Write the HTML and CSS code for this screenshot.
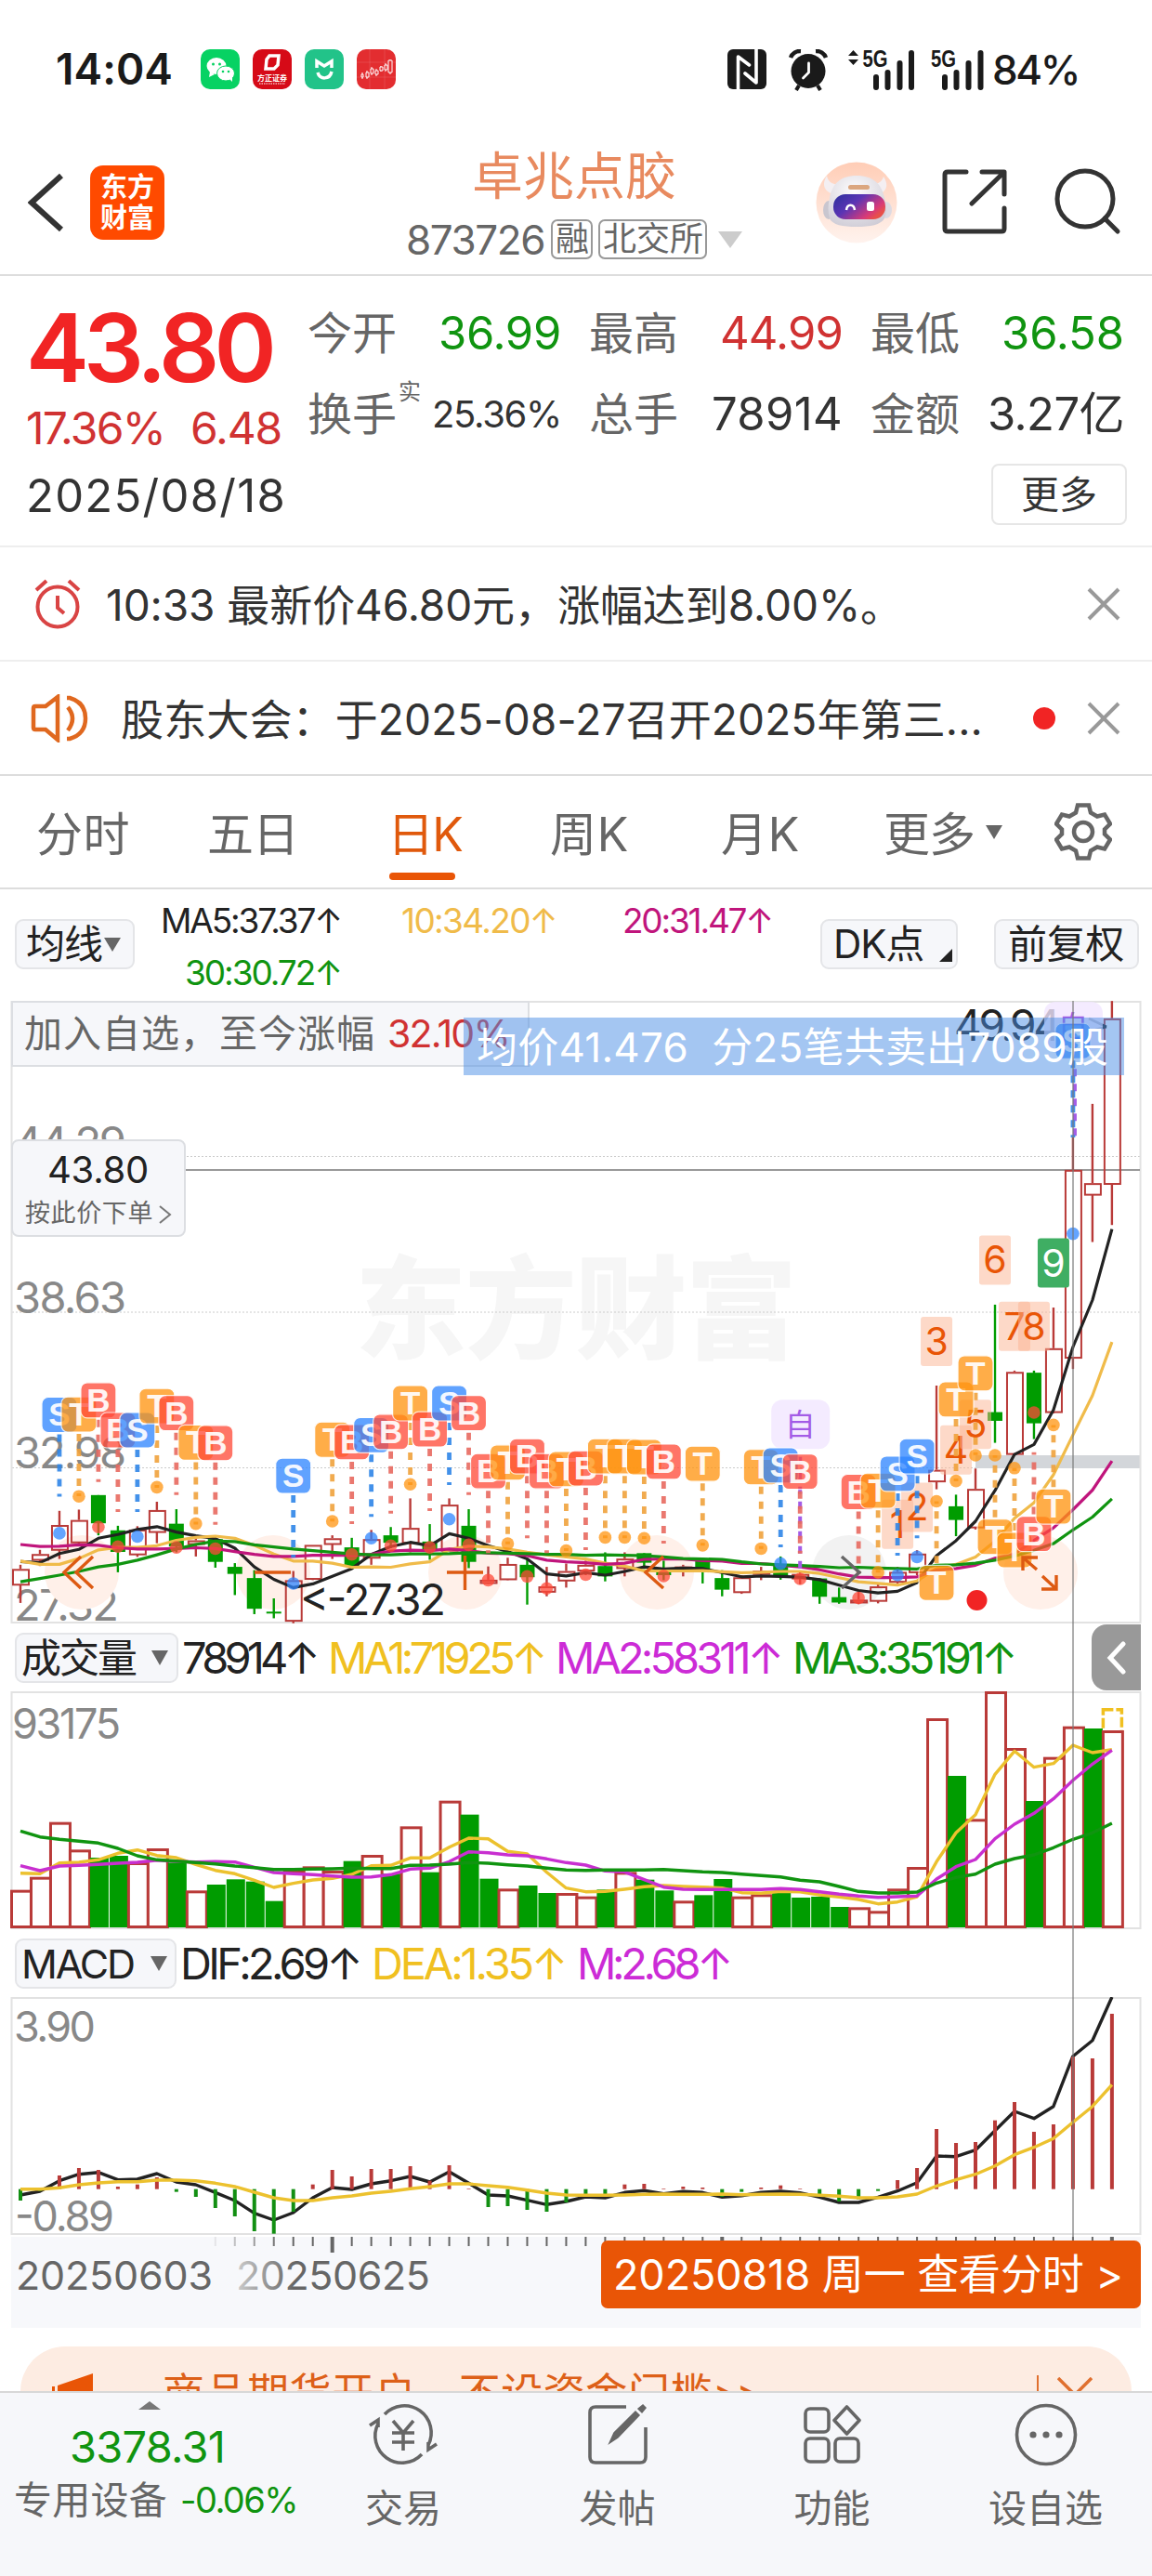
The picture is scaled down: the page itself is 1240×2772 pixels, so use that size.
FILE: index.html
```html
<!DOCTYPE html>
<html lang="zh-CN">
<head>
<meta charset="utf-8">
<title>卓兆点胶 873726</title>
<link rel="stylesheet" href="styles.css">
</head>
<body>
<div class="app">
  <div class="status">
    <span class="clock" data-fit="126">14:04</span>
    <div class="apps">
      <svg width="42" height="43" viewBox="0 0 42 43"><rect width="42" height="43" rx="10" fill="#07d263"/><ellipse cx="17" cy="18" rx="10.500" ry="9" fill="#fff"/><path d="M10 24l-1 6 6-3z" fill="#fff"/><circle cx="13.500" cy="16" r="1.500" fill="#07d263"/><circle cx="20.500" cy="16" r="1.500" fill="#07d263"/><ellipse cx="27" cy="26" rx="9.500" ry="8" fill="#fff" stroke="#07d263" stroke-width="1"/><path d="M31 32l3 3v-6z" fill="#fff"/><circle cx="24" cy="24" r="1.300" fill="#07d263"/><circle cx="30" cy="24" r="1.300" fill="#07d263"/></svg>
      <svg width="42" height="43" viewBox="0 0 42 43"><rect width="42" height="43" rx="10" fill="#d60a17"/><path d="M18 7h10l-1 10-4 4h-9l1-10z" fill="none" stroke="#fff" stroke-width="3.500"/><text x="21" y="34" class="tiny" text-anchor="middle">方正证券</text><path d="M7 37h28" stroke="#fff" stroke-width="1.500" stroke-dasharray="1.500 1" opacity=".7"/></svg>
      <svg width="42" height="43" viewBox="0 0 42 43"><rect width="42" height="43" rx="10" fill="#22c389"/><path d="M13 20v-7l8 5 8-5v7" fill="none" stroke="#fff" stroke-width="3.500"/><path d="M14 25c2 8 13 8 15-1" fill="none" stroke="#fff" stroke-width="3.500"/></svg>
      <svg width="42" height="43" viewBox="0 0 42 43"><rect width="42" height="43" rx="10" fill="#e32d30"/><path d="M0 14h42M0 30h42M14 0v43M30 0v43" stroke="#fff" stroke-width=".5" opacity=".25"/><path d="M6 25v7M11 23v9M16 19v9M21 21v8M26 18v6M31 15v9M36 11v16" stroke="#fff" stroke-width="1"/><path d="M5 27h2v3H5zM10 25h3v5h-3zM15 21h3v5h-3zM20 23h3v4h-3zM25 19h3v4h-3zM30 17h3v5h-3zM34 12h4v13h-4z" fill="#e32d30" stroke="#fff"/></svg>
    </div>
    <div class="signals">
      <svg class="nfc" width="42" height="43" viewBox="0 0 42 43"><rect width="42" height="43" rx="6" fill="#1a1a1a"/><path d="M11.500 43V8l12 9M31 0v36L19 26" fill="none" stroke="#fff" stroke-width="3.600" stroke-linecap="round" stroke-linejoin="round"/></svg>
      <svg class="bell" width="44" height="45" viewBox="0 0 44 45"><circle cx="22" cy="23.500" r="18.500" fill="#1a1a1a"/><path d="M3 9a11 11 0 0 1 11-7M41 9a11 11 0 0 0-11-7" stroke="#1a1a1a" stroke-width="4.500" fill="none"/><path d="M9 44l3-5M35 44l-3-5" stroke="#1a1a1a" stroke-width="4"/><path d="M22.500 15v10l-6 6" fill="none" stroke="#fff" stroke-width="2.800" stroke-linecap="round"/></svg>
      <svg width="72" height="45" viewBox="0 0 72 45"><path d="M0 7l5.500-6L11 7zM0 11l5.500 6L11 11z" fill="#1a1a1a"/><text x="15.500" y="19" class="g5" textLength="27" lengthAdjust="spacingAndGlyphs">5G</text><path d="M30 30v11M42.500 25v16M55.500 15v26M68 4v37" stroke="#1a1a1a" stroke-width="6" stroke-linecap="round"/></svg>
      <svg class="sim2" width="58" height="45" viewBox="0 0 58 45"><text x="0" y="19" class="g5" textLength="27" lengthAdjust="spacingAndGlyphs">5G</text><path d="M15 30v11M27.500 25v16M40.500 15v26M53.500 4v37" stroke="#1a1a1a" stroke-width="6" stroke-linecap="round"/></svg>
      <span class="battery" data-fit="93">84%</span>
    </div>
  </div>

  <header class="head">
    <svg class="back" width="40" height="66" viewBox="0 0 40 66"><path d="M36 4L4 33l32 29" fill="none" stroke="#333" stroke-width="6"/></svg>
    <div class="logo"><span>东方</span><span>财富</span></div>
    <div class="name">
      <div class="title" data-fit="220">卓兆点胶</div>
      <div class="code"><span class="num" data-fit="149">873726</span><span class="chip" >融</span><span class="chip"><span data-fit="108">北交所</span></span><i class="tri light"></i></div>
    </div>
    <svg class="robot" width="88" height="88" viewBox="0 0 88 88">
      <defs><linearGradient id="visor" x1="0" y1="0" x2="1" y2=".6"><stop offset="0" stop-color="#2a2f9c"/><stop offset=".45" stop-color="#5b35b4"/><stop offset=".85" stop-color="#d83a78"/><stop offset="1" stop-color="#e8504a"/></linearGradient>
      <linearGradient id="halo" x1="0" y1="0" x2="0" y2="1"><stop offset="0" stop-color="#ffcdb6"/><stop offset="1" stop-color="#fff3ee"/></linearGradient>
      <radialGradient id="shell" cx=".45" cy=".3" r=".75"><stop offset="0" stop-color="#fdfcfd"/><stop offset="1" stop-color="#cfccd6"/></radialGradient></defs>
      <circle cx="44" cy="44" r="43.500" fill="url(#halo)"/>
      <path d="M12 15c-5 8-4 15 4 19l8-9c-7-1-11-4-12-10zM73 16c5 8 4 13-1 17l-8-9c5-1 8-4 9-8z" fill="#f4efF2"/>
      <ellipse cx="14" cy="52" rx="6" ry="10" fill="#c9c6cf"/><ellipse cx="76" cy="52" rx="6" ry="9" fill="#dddae2"/>
      <path d="M44 15c18 0 27 9 30 24 2 8 3 15 0 22-4 7-15 9-30 9s-26-2-29-9c-2-7-2-14 0-22 3-15 11-24 29-24z" fill="url(#shell)"/>
      <rect x="35" y="25" width="23" height="5" rx="2.500" fill="#dba67f"/>
      <rect x="19" y="35" width="56" height="27" rx="13" fill="url(#visor)"/>
      <path d="M33 52c1-7 8-7 9 0" fill="none" stroke="#fff" stroke-width="2.500"/><rect x="55" y="43" width="8" height="10" rx="2.500" fill="#fff"/>
    </svg>
    <svg class="share" width="70" height="70" viewBox="0 0 70 70"><path d="M26 3H6Q3 3 3 6v58q0 3 3 3h58q3 0 3-3V42M43 3h24v24M65 5L32 37" fill="none" stroke="#333" stroke-width="5" stroke-linejoin="round" stroke-linecap="round"/></svg>
    <svg class="search" width="72" height="72" viewBox="0 0 72 72"><circle cx="33" cy="33" r="30" fill="none" stroke="#333" stroke-width="5"/><path d="M54 54l14 14" stroke="#333" stroke-width="5" stroke-linecap="round"/></svg>
  </header>

  <section class="quote">
    <div class="last">
      <div class="price"><span data-fit="264">43.80</span></div>
      <div class="chg"><span data-fit="149">17.36%</span><span data-fit="98">6.48</span></div>
    </div>
    <dl class="stats">
      <div><dt>今开</dt><dd class="dn" data-fit="132">36.99</dd></div>
      <div><dt>最高</dt><dd class="up" data-fit="132">44.99</dd></div>
      <div><dt>最低</dt><dd class="dn" data-fit="132">36.58</dd></div>
      <div><dt>换手<sup>实</sup></dt><dd class="pct" data-fit="139">25.36%</dd></div>
      <div><dt>总手</dt><dd data-fit="141">78914</dd></div>
      <div><dt>金额</dt><dd data-fit="147">3.27亿</dd></div>
    </dl>
    <span class="date"><span data-fit="280">2025/08/18</span></span>
    <button class="more">更多</button>
  </section>

  <div class="alert">
    <svg class="ai" width="52" height="56" viewBox="0 0 52 56"><circle cx="26" cy="31" r="21.500"/><path d="M26 19v13l7 6M3 13L14 3M49 13L38 3"/></svg>
    <span class="msg" data-fit="858">10:33 最新价46.80元，涨幅达到8.00%。</span>
    <svg class="x" width="36" height="36" viewBox="0 0 36 36"><path d="M2 2l32 32M34 2L2 34"/></svg>
  </div>
  <div class="alert second">
    <svg class="ai orange" width="62" height="52" viewBox="0 0 62 52"><path d="M29 3L16 13H5q-2 0-2 2v21q0 2 2 2h11l13 11zM40 14q10 12 0 25M39 4h3q17 5 17 22t-17 22h-3"/></svg>
    <span class="msg" data-fit="928">股东大会：于2025-08-27召开2025年第三...</span>
    <i class="dot"></i>
    <svg class="x" width="36" height="36" viewBox="0 0 36 36"><path d="M2 2l32 32M34 2L2 34"/></svg>
  </div>

  <nav class="tabs">
    <span data-fit="101">分时</span><span data-fit="98">五日</span><span class="on" data-fit="80">日K</span><span data-fit="85">周K</span><span data-fit="85">月K</span><span data-fit="98">更多</span><i class="tri"></i>
    <svg width="62" height="62" viewBox="0 0 62 62"><path d="M25 3h12l2 8 7 4 8-2 6 10-6 6v5l6 6-6 10-8-2-7 4-2 8H25l-2-8-7-4-8 2-6-10 6-6v-5l-6-6 6-10 8 2 7-4z" transform="translate(0 -.5)"/><circle cx="31" cy="31" r="10"/></svg>
  </nav>

  <div class="mabar">
    <button class="pill avg"><span data-fit="82">均线</span><i class="tri"></i></button>
    <div class="mas"><span class="m5" data-fit="194">MA5:37.37↑</span><span class="m10" data-fit="167">10:34.20↑</span><span class="m20" data-fit="161">20:31.47↑</span><span class="m30" data-fit="168">30:30.72↑</span></div>
    <button class="pill dk"><span data-fit="97">DK点</span><i></i></button>
    <button class="pill fq"><span data-fit="125">前复权</span></button>
  </div>

  <main class="charts">
    <div class="pane"><svg id="price" width="1240" height="670"></svg>
      <div class="joined"><span data-fit="378">加入自选，至今涨幅</span><b data-fit="131">32.10%</b></div>
      <div class="order"><span data-fit="109">43.80</span><div><em data-fit="138">按此价下单</em><svg width="14" height="20" viewBox="0 0 14 20"><path d="M1 1l11 9-11 9" fill="none" stroke="#777" stroke-width="2"/></svg></div></div>
      <div class="banner"><span data-fit="680">均价41.476&nbsp; 分25笔共卖出7089股</span></div>
    </div>
    <div class="legend">
      <button class="pill ind"><span data-fit="123">成交量</span><i class="tri"></i></button>
      <span class="k" data-fit="144">78914↑</span><span class="y" data-fit="232">MA1:71925↑</span><span class="p" data-fit="242">MA2:58311↑</span><span class="g" data-fit="238">MA3:35191↑</span>
      <div class="side"><svg width="22" height="38" viewBox="0 0 22 38"><path d="M18 4L4 19l14 15" fill="none" stroke="#fff" stroke-width="5" stroke-linecap="round"/></svg></div>
    </div>
    <svg id="volume" width="1240" height="256"></svg>
    <div class="legend macd">
      <button class="pill ind"><span data-fit="121">MACD</span><i class="tri"></i></button>
      <span class="k" data-fit="193">DIF:2.69↑</span><span class="y" data-fit="208">DEA:1.35↑</span><span class="p" data-fit="164">M:2.68↑</span>
    </div>
    <svg id="macd" width="1240" height="256"></svg>
    <svg id="axis" width="1240" height="100"></svg>
    <i class="cross"></i>
    <div class="tip"><span data-fit="549">20250818 周一 查看分时 &gt;</span></div>
  </main>

  <div class="promo">
    <svg width="46" height="60" viewBox="0 0 46 60"><path d="M0 16h3v30H0zM6 15L44 2v52L6 42z" fill="#e95506"/></svg>
    <div><span data-fit="592">商品期货开户，不设资金门槛</span><span data-fit="50">&gt;&gt;</span></div>
    <i></i>
    <svg class="px" width="38" height="38" viewBox="0 0 38 38"><path d="M1 1l36 36M37 1L1 37" stroke="#e0702f" stroke-width="3.500"/></svg>
  </div>

  <footer class="dock">
    <div class="index"><i class="upt"></i><span class="pts" data-fit="167">3378.31</span><div><span data-fit="165">专用设备</span><em data-fit="126">-0.06%</em></div></div>
    <div class="item"><svg width="78" height="68" viewBox="0 0 78 68"><path d="M19 12A29 29 0 0 1 66 45M59 55A29 29 0 0 1 12 22M3 24l9-6v8M75 44l-9 6v-8"/><path d="M28 19l11 13 11-13M27 32h24M27 42h24M39 32v19"/></svg><span>交易</span></div>
    <div class="item"><svg width="66" height="68" viewBox="0 0 66 68"><path d="M42 4H9Q3 4 3 10v48q0 6 6 6h48q6 0 6-6V26"/><path d="M24 43l5-11L52 9l4 4-23 24zM55 6l5-4 3 3-4 5z" fill="#666" stroke-width="1.500"/></svg><span>发帖</span></div>
    <div class="item"><svg width="62" height="68" viewBox="0 0 62 68"><rect x="2" y="6" width="25" height="25" rx="5"/><rect x="2" y="38" width="25" height="25" rx="5"/><rect x="34" y="38" width="25" height="25" rx="5"/><path d="M46.500 4L60 18.500 46.500 33 33 18.500z" stroke-linejoin="round"/></svg><span>功能</span></div>
    <div class="item"><svg width="68" height="68" viewBox="0 0 68 68"><circle cx="34" cy="34" r="31.500"/><g fill="#666" stroke="none"><circle cx="20" cy="34" r="3.600"/><circle cx="34" cy="34" r="3.600"/><circle cx="48" cy="34" r="3.600"/></g></svg><span>设自选</span></div>
  </footer>
</div>
<script src="chart.js"></script>
</body>
</html>
```

FILE: styles.css
```css
* { box-sizing: border-box; margin: 0; padding: 0; }
body { font-family: Inter, "Noto Sans CJK SC", sans-serif; color: #333; background: #fff; }
button { font: inherit; color: inherit; }
i, em { font-style: normal; }
svg { display: block; flex: none; }
[data-fit] { white-space: nowrap; }
.app { width: 1240px; height: 2772px; overflow: hidden; display: flex; flex-direction: column; }
.tri { width: 0; height: 0; border: 9px solid transparent; border-top: 15px solid #666; border-bottom: 0; flex: none; }
.tri.light { border-width: 18px 13px 0; border-top-color: #ccc; margin-left: 6px; }

.status { height: 150px; padding: 53px 79px 0 60px; display: flex; align-items: flex-start; color: #1a1a1a; }
.clock { font-size: 46px; font-weight: 600; line-height: 43px; margin-right: 30px; }
.apps { display: flex; gap: 14px; }
.tiny { font: bold 8px "Noto Sans CJK SC", sans-serif; fill: #fff; }
.g5 { font: 700 25px "Liberation Sans", sans-serif; fill: #1a1a1a; }
.signals { margin-left: auto; display: flex; }
.bell { margin: 0 21px 0 23px; }
.sim2 { margin: 0 8px 0 17px; }
.battery { font-size: 44px; font-weight: 550; line-height: 44px; }

.head { height: 147px; border-bottom: 2px solid #ddd; display: flex; position: relative; }
.back { margin: 35px 0 0 30px; }
.logo { width: 80px; height: 80px; margin: 28px 0 0 27px; border-radius: 14px; background: #ff4a00; color: #fff; display: flex; flex-direction: column; align-items: center; justify-content: center; font-size: 29px; line-height: 33px; font-weight: 700; }
.name { width: 380px; margin-left: 254px; }
.title { font-size: 55px; line-height: 70px; color: #e88a5f; margin: 4px 0 0 77px; }
.code { display: flex; align-items: center; height: 48px; margin-top: 10px; padding-left: 6px; color: #666; }
.code .num { font-size: 44px; margin-right: 7px; }
.chip { border: 2px solid #999; border-radius: 7px; height: 43px; line-height: 38px; font-size: 36px; padding: 0 2px 0 3px; margin-right: 6px; white-space: nowrap; }
.robot { margin: 24px 0 0 67px; }
.share { margin: 32px 0 0 48px; }
.search { margin: 31px 0 0 51px; }

.quote { height: 293px; border-bottom: 2px solid #eee; padding: 27px 27px 0 28px; display: grid; grid-template-columns: 303px 1fr; grid-template-rows: 175px 66px; }
.price { font-size: 102px; line-height: 100px; font-weight: 570; color: #f12424; }
.chg { display: flex; gap: 28px; font-size: 48px; line-height: 73px; color: #d03232; }
.stats { display: grid; grid-template-columns: repeat(3, 273px); column-gap: 30px; grid-template-rows: 70px 105px; }
.stats div { display: flex; justify-content: space-between; align-items: center; }
.stats dt { font-size: 48px; color: #666; position: relative; line-height: 60px; }
.stats dd { font-size: 49px; line-height: 60px; }
.stats dd.pct { font-size: 40px; }
.stats sup { position: absolute; left: 98px; top: -9px; font-size: 24px; line-height: 30px; }
.dn { color: #109410; }
.up { color: #d03232; }
.date { font-size: 49px; line-height: 68px; padding-top: 1px; }
.more { width: 146px; height: 66px; justify-self: end; border: 2px solid #e6e6e6; border-radius: 8px; background: #fff; font-size: 41px; line-height: 56px; }

.alert { height: 123px; border-bottom: 2px solid #eee; padding: 0 34px 0 36px; display: flex; align-items: center; }
.alert.second { padding-left: 33px; border-color: #ddd; }
.ai { fill: none; stroke: #d94444; stroke-width: 4; margin-right: 26px; }
.ai.orange { stroke: #e0681f; margin-right: 35px; stroke-width: 4.5; }
.msg { font-size: 46px; line-height: 60px; padding-top: 2px; }
.x { margin-left: auto; stroke: #999; stroke-width: 4; }
.dot { width: 24px; height: 24px; border-radius: 50%; background: #f12424; margin-left: auto; }
.dot + .x { margin-left: 34px; }

.tabs { height: 122px; border-bottom: 2px solid #ddd; padding-left: 39px; display: flex; align-items: center; font-size: 50px; line-height: 120px; color: #666; }
.tabs span { width: 101px; margin-right: 83px; padding-top: 5px; }
.tabs span:nth-child(2) { width: 98px; margin-right: 96px; }
.tabs .on { width: 80px; margin-right: 95px; color: #e0590c; position: relative; }
.tabs .on::after { content: ""; position: absolute; left: 2px; bottom: 11px; width: 71px; height: 8px; border-radius: 4px; background: #e95506; }
.tabs span:nth-child(4) { width: 85px; margin-right: 99px; }
.tabs span:nth-child(5) { width: 85px; margin-right: 90px; }
.tabs span:nth-child(6) { width: 98px; margin-right: 12px; }
.tabs svg { margin-left: 56px; fill: none; stroke: #666; stroke-width: 4.5; }

.pill { height: 54px; background: #f6f7fa; border: 2px solid #e4e5e8; border-radius: 9px; display: flex; align-items: center; color: #222; font-size: 42px; line-height: 46px; flex: none; }
.mabar { height: 120px; padding: 0 14px 0 16px; display: flex; align-items: flex-start; }
.mabar .pill { margin-top: 32px; }
.avg { width: 129px; padding-left: 10px; }
.avg .tri { margin-left: 2px; }
.mas { width: 710px; padding: 12px 0 0 28px; display: grid; grid-template-columns: 259px 238px 1fr; grid-template-rows: 44px 67px; font-size: 37px; line-height: 44px; }
.m5 { color: #222; }
.m10 { color: #f0bb4a; }
.m20 { color: #c0157c; }
.m30 { color: #109410; margin-left: 26px; line-height: 67px; }
.dk { width: 148px; margin-left: 28px; padding-left: 12px; }
.dk i { border: 7px solid transparent; border-right-color: #222; border-bottom-color: #222; margin: 24px 0 0 17px; }
.fq { width: 156px; margin-left: auto; padding-left: 13px; }

.charts { height: 1427px; position: relative; flex: none; }
.pane { position: relative; height: 670px; }
.joined { position: absolute; left: 12px; top: 0; width: 558px; height: 71px; background: #f6f7fa; border: 2px solid #dcdee2; padding-left: 12px; display: flex; gap: 13px; font-size: 41px; line-height: 66px; color: #666; }
.joined b { font-weight: 400; color: #d03232; }
.order { position: absolute; left: 12px; top: 149px; width: 188px; height: 105px; background: #f6f7fa; border: 2px solid #dcdee2; border-radius: 8px; display: flex; flex-direction: column; font-size: 40px; line-height: 42px; color: #222; padding-top: 10px; }
.order > span { margin-left: 37px; }
.order div { display: flex; align-items: center; font-size: 27px; line-height: 44px; padding: 4px 0 0 13px; gap: 6px; color: #666; }
.order svg { margin-top: 2px; }
.banner { position: absolute; left: 499px; top: 18px; width: 711px; height: 62px; background: rgba(74, 141, 229, .5); color: #fff; font-size: 44px; line-height: 64px; padding-left: 14px; }
.legend { height: 73px; padding-left: 16px; display: flex; align-items: center; font-size: 47px; line-height: 72px; }
.ind { width: 176px; padding-left: 5px; margin-right: 4px; font-size: 43px; }
.macd .ind { width: 174px; }
.ind .tri { margin-left: 17px; border-top-width: 16px; }
.macd .ind .tri { margin-left: 18px; }
.legend > span { margin-right: 13px; }
.k { color: #222; }
.y { color: #f0c020; }
.p { color: #cc2bd6; }
.g { color: #109410; }
.side { margin: 0 12px 0 auto; width: 53px; height: 71px; border-radius: 16px 0 0 16px; background: #999; display: flex; align-items: center; justify-content: center; }
.cross { position: absolute; left: 1154px; top: 0; width: 2px; height: 1334px; background: rgba(120, 120, 120, .6); }
.tip { position: absolute; left: 647px; top: 1334px; width: 581px; height: 73px; border-radius: 7px; background: #e95506; color: #fff; font-size: 45px; line-height: 73px; padding-left: 13px; }

.promo { flex: none; width: 1196px; height: 48px; margin: 21px 22px 0; padding-left: 34px; background: #fdece2; border-radius: 60px 60px 0 0; overflow: hidden; display: flex; align-items: flex-start; color: #dd6018; font-size: 45px; line-height: 60px; }
.promo > svg:first-child { margin-top: 27px; }
.promo > div { margin: 21px 0 0 73px; width: 642px; white-space: nowrap; }
.promo > i { width: 2px; height: 40px; background: #e0702f; margin: 31px 0 0 299px; }
.px { margin: 33px 0 0 20px; }

.dock { height: 199px; flex: none; background: #f6f7fa; border-top: 2px solid #d8d8d8; display: grid; grid-template-columns: 319px 230px 231px 231px 229px; color: #666; }
.index { padding: 9px 0 0 15px; display: flex; flex-direction: column; }
.upt { width: 0; height: 0; border: 12px solid transparent; border-bottom: 9px solid #777; border-top: 0; margin-left: 134px; }
.pts { font-size: 47px; line-height: 58px; margin: 11px 0 0 60px; color: #109410; }
.index div { display: flex; gap: 14px; font-size: 41px; line-height: 56px; }
.index em { font-size: 38px; color: #109410; }
.item { display: flex; flex-direction: column; align-items: center; padding-top: 11px; font-size: 41px; line-height: 60px; }
.item svg { fill: none; stroke: #666; stroke-width: 3.6; margin-bottom: 15px; }
```

FILE: chart.js
```js
const RED = '#b93a38', GREEN = '#009c00';
const X = i => 22 + i * 20.98;
const PY = v => v / 2.24 - 7;      // price pane units to pixels
const VY = v => (v - 240) / 3;     // volume pane
const MY = v => (v - 207) / 3;     // macd pane

const path = (vals, y, color, w) =>
  `<polyline fill="none" stroke="${color}" stroke-width="${w}" stroke-linejoin="round" points="${vals.map((v, i) => X(i).toFixed(1) + ',' + y(v).toFixed(1)).join(' ')}"/>`;
const line = (x1, y1, x2, y2, color, w, extra = '') =>
  `<line x1="${x1}" y1="${y1}" x2="${x2}" y2="${y2}" stroke="${color}" stroke-width="${w}" ${extra}/>`;
const rect = (x, y, w, h, attrs) => `<rect x="${x}" y="${y}" width="${w}" height="${h}" ${attrs}/>`;
const text = (x, y, s, size, fill, len, extra = '') =>
  `<text x="${x}" y="${y}" font-size="${size}" fill="${fill}" ${len ? `textLength="${len}"` : ''} ${extra}>${s}</text>`;
const frame = h => rect(12.5, 1, 1215, h, 'fill="none" stroke="#e2e2e2" stroke-width="2"');

// direction, body top, body bottom, high, low
const candles = `r1385,1423,1375,1467 r1349,1363,1339,1378 r1279,1339,1245,1361 r1267,1321,1242,1325 g1207,1275,1207,1304
g1292,1344,1281,1393 r1290,1350,1282,1356 r1243,1296,1223,1323 g1276,1331,1241,1345 r1316,1325,1310,1355
g1313,1368,1308,1382 g1380,1397,1371,1448 g1407,1481,1388,1494 g1488,1492,1456,1504 r1412,1510,1390,1516
r1327,1409,1327,1412 r1311,1325,1304,1361 g1333,1378,1310,1378 r1313,1358,1291,1375 g1304,1322,1284,1335
r1286,1322,1215,1345 g1319,1340,1277,1363 r1230,1341,1215,1341 g1281,1368,1241,1383 r1411,1419,1379,1421
r1373,1410,1358,1412 g1375,1405,1360,1471 r1427,1440,1380,1451 r1390,1413,1372,1430 r1375,1389,1365,1400
g1378,1403,1345,1415 r1360,1383,1345,1403 g1347,1370,1347,1385 g1385,1400,1365,1412 r1379,1387,1375,1403
g1362,1387,1362,1420 g1407,1435,1388,1451 r1405,1441,1400,1445 r1389,1397,1380,1412 g1375,1400,1355,1411
r1397,1408,1390,1422 g1408,1452,1408,1469 g1453,1466,1430,1469 r1459,1466,1440,1470 r1427,1462,1420,1468
r1392,1416,1380,1420 r1348,1393,1340,1400 r1146,1174,943,1193 g1234,1267,1206,1306 r1192,1285,1143,1290
g1007,1028,748,1081 r910,1108,907,1112 g912,1034,907,1072 r853,1007,755,1010 r423,876,345,903
r455,483,264,597 r58,457,16,556`.split(/\s+/).map(s => [s[0], ...s.slice(1).split(',').map(Number)]);

const ma5 = [1367,1370,1348,1338,1311,1302,1290,1283,1296,1305,1312,1335,1380,1410,1430,1421,1403,1384,1350,1331,1321,1329,1300,1311,1329,1343,1361,1397,1402,1394,1400,1391,1380,1385,1383,1384,1394,1404,1402,1403,1405,1411,1424,1437,1443,1439,1418,1353,1317,1270,1196,1109,1085,1002,850,737,566];
const ma10 = [1366,1374,1374,1360,1339,1333,1333,1329,1316,1309,1306,1311,1328,1349,1366,1366,1371,1381,1380,1381,1373,1368,1338,1330,1332,1337,1345,1351,1356,1361,1371,1378,1390,1390,1390,1389,1392,1394,1393,1391,1391,1396,1406,1416,1420,1424,1414,1384,1374,1356,1318,1263,1225,1158,1062,967,838];
const ma20 = [1326,1331,1330,1327,1328,1334,1337,1337,1336,1334,1336,1343,1350,1355,1355,1352,1352,1352,1350,1342,1340,1341,1337,1341,1347,1348,1353,1364,1368,1370,1374,1371,1362,1361,1361,1365,1366,1372,1372,1376,1380,1387,1397,1405,1406,1406,1404,1388,1384,1376,1359,1349,1316,1286,1242,1195,1125];
const ma30 = [1416,1408,1400,1391,1380,1374,1364,1351,1337,1326,1318,1319,1327,1332,1337,1341,1345,1349,1351,1351,1349,1349,1348,1346,1346,1347,1348,1350,1350,1352,1351,1352,1353,1356,1360,1361,1362,1368,1373,1375,1377,1379,1382,1381,1383,1384,1385,1376,1375,1371,1364,1354,1340,1324,1291,1260,1216];

// trade markers: index, kind, badge top, dot
const marks = [[2,'S',971,1299],[3,'T',970,1210],[4,'B',936,1284],[5,'B',1008,1331],[6,'S',1008,1307],[7,'T',950,1188],[8,'B',967,1333],[9,'T',1038,1276],[10,'B',1039,1336],[14,'S',1118,1420],[16,'T',1031,1270],[17,'B',1037,1350],[18,'S',1020,1311],[19,'B',1012,1329],[20,'T',943,1181],[21,'B',1006,1333],[22,'S',943,1265],[23,'B',967,1327],[24,'B',1107,1412],[25,'T',1086,1324],[26,'B',1071,1403],[27,'B',1107,1432],[28,'T',1102,1341],[29,'B',1100,1399],[30,'T',1071,1309],[31,'T',1071,1309],[32,'T',1073,1311],[33,'B',1084,1402],[35,'T',1089,1328],[38,'T',1097,1336],[39,'S',1093,1372],[40,'B',1108,1409],[43,'B',1157,1455],[44,'T',1154,1393],[45,'S',1113,1400],[46,'S',1071,1356],[47,'T',1376,1222],[48,'T',934,1173],[49,'T',871,1111],[50,'T',1265,1111],[51,'T',1297,1142],[52,'B',1258,1008],[53,'T',1192,1038],[54,'S',70,577]];
const tone = { S: '#2f86ff', T: '#ff9410', B: '#ff4a38' };
const stem = { S: '#2f86e8', T: '#f0a23c', B: '#e86a60' };

function drawPrice() {
  let s = '';
  s += text(620, 376, '东方财富', 120, '#f6f6f6', 476, 'font-weight="900" text-anchor="middle"');
  for (const y of [167.5, 335, 502.5]) s += line(13, y, 1227, y, '#ccc', 1, 'stroke-dasharray="2 2"');
  s += rect(1050, 489, 177, 14, 'fill="#d3d6da"');
  s += frame(668);
  [[169, '44.29', 15], [336, '38.63', 15], [503, '32.98', 15], [667, '27.32', 15]].forEach(([y, t, x]) => { s += text(x, y, t, 47, '#888', t === '27.32' ? 113 : 121); });
  s += line(13, 182, 1227, 182, '#999', 2);
  for (const cx of [88, 294, 501, 707, 1120]) s += `<circle cx="${cx}" cy="615" r="40" fill="#fff0e9"/>`;
  s += '<circle cx="914" cy="615" r="40" fill="#f2f2f2"/>';
  candles.forEach(([d, t, b, h, l], i) => {
    const x = X(i), top = PY(t), bot = PY(b);
    if (d === 'g') {
      s += line(x, PY(h), x, PY(l), GREEN, 2.4) + rect(x - 8, top, 16, Math.max(2, bot - top), `fill="${GREEN}"`);
    } else {
      s += line(x, PY(h), x, top, RED, 2.4) + line(x, bot, x, PY(l), RED, 2.4);
      s += rect(x - 8, top + 1, 17, Math.max(1, bot - top - 1), `fill="none" stroke="${RED}" stroke-width="2"`);
    }
  });
  s += path(ma5, PY, '#222', 3.2) + path(ma10, PY, '#f0bb4a', 3.2) + path(ma20, PY, '#c0157c', 3.2) + path(ma30, PY, '#109410', 3.2);
  s += text(323, 661, '&lt;-27.32', 47, '#222', 157);
  s += text(1027, 43, '49.94', 46, '#222', 115);
  s += line(1172, 19, 1191, 28, '#222', 2.5) + line(1191, 28, 1179, 31, '#222', 2.5);

  [[45,1218,'1'],[46,1177,'2'],[47,777,'3'],[48,1039,'4'],[49,977,'5'],[50,581,'6'],[51,741,'7'],[52,741,'8'],[53,588,'9']].forEach(([i, t, n]) => {
    const nine = n === '9', x = X(i);
    s += rect(x - 17, PY(t), 34, 53, `rx="3" fill="${nine ? '#3fae63' : 'rgba(252,180,145,.5)'}"`);
    s += text(x, PY(t) + 41, n, 41, nine ? '#fff' : '#e95506', 0, 'text-anchor="middle"');
  });
  [[40, 977], [54, 18]].forEach(([i, t]) => {
    s += rect(X(i) - 31, PY(t), 63, 53, 'rx="12" fill="#f1e6ff" fill-opacity=".8"');
    s += text(X(i), PY(t) + 39, '自', 33, '#a35ce6', 0, 'text-anchor="middle"');
  });
  s += line(X(40), PY(1115), X(40), PY(1390), '#a35ce6', 4, 'stroke-dasharray="8 8"');
  s += line(X(54) + 2, PY(180), X(54) + 2, PY(348), '#a35ce6', 4, 'stroke-dasharray="8 8"');

  for (const [i, k, t, d] of marks) {
    const x = X(i), y = PY(t), below = d < t;
    let y1 = y + 40, y2 = y + 38 + 69;
    if (below) { y1 = y - 2; y2 = k === 'B' ? PY(1104) : PY(d); }
    if (i === 54) y2 = PY(345);
    s += line(x, y1, x, y2, stem[k], 4.8, 'stroke-dasharray="8 8" opacity=".9"');
    s += `<circle cx="${x}" cy="${PY(d)}" r="6.800" fill="${tone[k]}" opacity=".75"/>`;
  }
  for (const [i, k, t] of marks) {
    const x = X(i), y = PY(t);
    s += `<g opacity=".76">` + rect(x - 19, y, 38, 38, `rx="7" fill="${tone[k]}" stroke="#fff" stroke-width="1.200"`) + '</g>';
    s += text(x, y + 31, k, 35, '#fff', 0, 'text-anchor="middle" font-weight="700" font-family="Liberation Sans" opacity=".92"');
  }

  const o = 'fill="none" stroke="#dd5a12" stroke-width="3.400"';
  s += `<path d="M87 598L69 615l18 17M100 598L82 615l18 17" ${o}/><path d="M274 615h39" ${o}/><path d="M481 615h39M500.500 597v37" ${o}/><path d="M714 598l-19 17 19 17" ${o}/>`;
  s += `<path d="M906 598l19 17-19 17" fill="none" stroke="#666" stroke-width="3.400"/>`;
  s += `<path d="M1116 612l-15-13M1101 613v-14h16M1122 619l15 14M1137 618v15h-16" ${o}/>`;
  s += '<circle cx="1051.500" cy="645" r="11" fill="#f12424"/>';
  document.getElementById('price').innerHTML = s;
}

const vols = 'r884 r842 r665 r754 g777 g771 r795 r750 g793 r886 g864 g847 g854 g917 r822 r808 r822 g788 r771 g829 r679 g824 r596 g638 g845 r880 g867 g891 r894 r905 g880 r826 g848 g883 r919 g898 g846 r905 r898 g888 g906 g903 g936 r940 r952 r880 r810 r330 g513 r655 r243 r426 g594 r455 r356 g360 r369'.split(' ');
const vm1 = [827,829,794,792,784,763,752,770,777,799,818,829,850,873,860,849,844,831,803,802,778,778,743,714,716,757,765,824,875,887,886,879,871,867,870,872,875,890,892,886,887,897,904,912,926,920,903,790,697,638,508,433,485,473,414,438,428];
const vm2 = [803,819,804,802,799,795,792,785,789,791,790,791,808,825,829,832,836,840,839,832,814,811,790,758,761,768,771,781,793,801,820,823,848,872,879,880,880,880,880,877,880,887,895,901,905,903,901,846,806,783,716,669,634,587,527,475,430];
const vm3 = [691,710,718,724,730,747,771,784,788,793,797,804,809,815,815,814,813,811,812,812,802,801,798,793,795,800,804,811,817,818,817,817,817,815,819,823,825,830,835,839,850,855,870,886,891,891,888,859,841,830,798,780,768,745,718,697,666];

function drawVolume() {
  let s = frame(254) + text(13, 51, '93175', 45, '#888', 117);
  s += rect(X(56) - 9.5, VY(299), 20, 60, 'fill="none" stroke="#f0c020" stroke-width="3.500" stroke-dasharray="11 3"');
  vols.forEach((v, i) => {
    const y = VY(+v.slice(1));
    s += v[0] === 'g' ? rect(X(i) - 9, y, 20, 254 - y, `fill="${GREEN}"`)
      : rect(X(i) - 9.5, y + .5, 21, 253 - y, `fill="#fff" stroke="${RED}" stroke-width="3"`);
  });
  s += path(vm1, VY, '#ecc12e', 3.4) + path(vm2, VY, '#c82fd0', 3.4) + path(vm3, VY, '#109410', 3.4);
  document.getElementById('volume').innerHTML = s;
}

const hist = [864,833,783,759,765,819,812,789,836,852,888,915,963,971,900,812,765,786,762,762,753,800,750,825,885,882,894,900,870,846,844,812,810,825,819,822,852,836,822,815,825,852,867,860,833,798,759,633,678,675,605,546,642,618,400,405,261];
const dif = [846,834,800,779,773,797,795,777,804,813,838,864,905,927,903,855,822,828,810,800,786,804,771,808,846,849,863,877,867,852,855,838,832,842,835,838,853,848,838,834,839,853,870,870,853,833,806,720,722,701,638,576,599,560,398,347,207];
const dea = [827,827,823,813,807,803,803,798,798,800,808,819,837,855,864,864,855,849,840,834,826,819,810,810,816,821,830,840,846,847,847,846,844,843,844,844,843,845,844,843,844,847,850,855,855,852,843,817,797,779,752,716,692,664,611,560,490];

function drawMacd() {
  let s = frame(254) + text(15, 48, '3.90', 45, '#888', 88) + text(16, 252, '-0.89', 45, '#888', 107);
  s += path(dif, MY, '#222', 3.4);
  hist.forEach((v, i) => { s += line(X(i), MY(827), X(i), MY(v), v > 827 ? '#128f12' : RED, 4); });
  s += path(dea, MY, '#ecc12e', 3.4);
  document.getElementById('macd').innerHTML = s;
}

function drawAxis() {
  let s = '<defs><linearGradient id="fade"><stop offset="0" stop-color="#ccc"/><stop offset=".3" stop-color="#666"/></linearGradient></defs>';
  s += rect(12, 2, 1216, 98, 'fill="#f7f8fb"');
  for (let i = 10; i < 57; i++) {
    const thick = i % 20 === 16;
    s += line(X(i), 2, X(i), thick ? 19 : 12, '#666', thick ? 4 : 2, `opacity="${Math.min(1, (i - 9.5) / 4)}"`);
  }
  s += text(17, 59, '20250603', 43, '#666', 212) + text(254, 59, '20250625', 43, 'url(#fade)', 209);
  document.getElementById('axis').innerHTML = s;
}

function fitLabels() {
  for (const el of document.querySelectorAll('[data-fit]')) {
    const r = document.createRange();
    r.selectNodeContents(el);
    const n = [...el.textContent].length;
    el.style.letterSpacing = ((+el.dataset.fit - r.getBoundingClientRect().width) / n).toFixed(3) + 'px';
  }
}

drawPrice();
drawVolume();
drawMacd();
drawAxis();
fitLabels();
```
